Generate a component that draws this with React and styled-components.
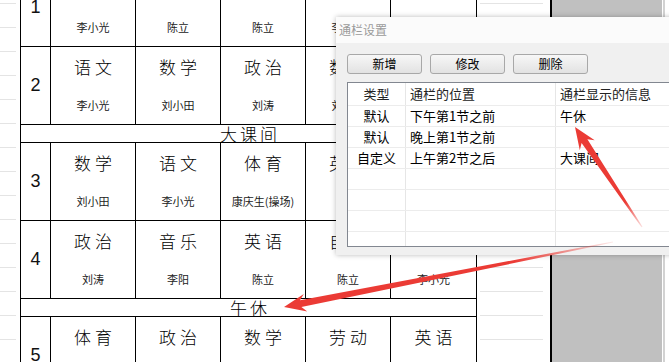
import styled, { createGlobalStyle } from "styled-components";

const PageStyle = createGlobalStyle`
  html, body {
    margin: 0;
    padding: 0;
    background: #fff;
  }
  body {
    font-family: "Noto Sans CJK SC", sans-serif;
  }
`;

const Screen = styled.div`
  position: relative;
  width: 669px;
  height: 362px;
  overflow: hidden;
  display: flex;
  background: #fff;
`;

const Gutter = styled.div`
  flex: none;
  width: ${(p) => p.$width}px;
  background-image: linear-gradient(to bottom, #e4e4e4 0 1px, transparent 1px);
  background-size: ${(p) => p.$line}px 24px;
  background-repeat: repeat-y;
  background-position: ${(p) => p.$inset}px 3px;
`;

const Timetable = styled.div`
  flex: none;
  align-self: flex-start;
  margin-top: -32px;
  display: grid;
  grid-template-columns: 29px repeat(4, 84px) 85px;
  gap: 1px;
  padding: 1px;
  background: #000;
`;

const NumberCell = styled.div`
  height: 77px;
  background: #fff;
  display: flex;
  align-items: center;
  justify-content: center;
  font-family: "Liberation Sans", Arial, sans-serif;
  font-size: 18px;
  color: #111;
`;

const LessonCell = styled.div`
  height: 77px;
  background: #fff;
  display: flex;
  flex-direction: column;
  align-items: center;
  padding-top: 9px;
  box-sizing: border-box;
`;

const Subject = styled.div`
  font-size: 17px;
  font-weight: 300;
  line-height: 22px;
  letter-spacing: 4px;
  padding-left: 4px;
  color: #000;
`;

const Teacher = styled.div`
  margin-top: 20px;
  font-size: 11px;
  line-height: 14px;
  color: #222;
`;

const BreakRow = styled.div`
  grid-column: 1 / -1;
  height: 17px;
  background: #fff;
  text-align: center;
  font-size: 17px;
  font-weight: 300;
  line-height: 17px;
  letter-spacing: 3px;
  padding-left: 3px;
  color: #000;
`;

const Divider = styled.div`
  flex: none;
  width: 2px;
  background: #000;
`;

const GrayPane = styled.div`
  flex: none;
  width: 110px;
  background: #c0c0c0;
`;

const PaneEdge = styled.div`
  flex: none;
  width: 2px;
  margin-left: 1px;
  background: #d2d2d2;
`;

const Dialog = styled.div`
  position: absolute;
  left: 336px;
  top: 17px;
  width: 360px;
  height: 238px;
  display: flex;
  flex-direction: column;
  background: #f0f0f0;
  box-shadow: 0 0 5px rgba(0, 0, 0, 0.28);
  z-index: 2;
`;

const TitleBar = styled.div`
  height: 26px;
  flex: none;
  padding-left: 3px;
  background: #fbfbfb;
  font-size: 12px;
  line-height: 26px;
  color: #9a9a9a;
`;

const DialogBody = styled.div`
  flex: 1;
  padding: 11px 0 0 11px;
  display: flex;
  flex-direction: column;
`;

const ButtonRow = styled.div`
  display: flex;
  gap: 8px;
`;

const Button = styled.button`
  width: 75px;
  height: 20px;
  padding: 0;
  border: 1px solid #a8a8a8;
  border-radius: 3px;
  background: linear-gradient(#f7f7f7, #e2e2e2);
  font-family: "Noto Sans CJK SC", sans-serif;
  font-size: 12px;
  line-height: 18px;
  color: #000;
`;

const ListBox = styled.div`
  margin-top: 8px;
  height: 165px;
  box-sizing: border-box;
  border: 1px solid #828790;
  border-right: none;
  background: #fff;
  overflow: hidden;
`;

const ListRow = styled.div`
  display: grid;
  grid-template-columns: 58px 150px 1fr;
  height: ${(p) => (p.$head ? 23 : 21)}px;
  border-bottom: 1px solid #ececec;
  box-sizing: border-box;
  font-size: 13px;
  line-height: ${(p) => (p.$head ? 22 : 20)}px;
  color: ${(p) => (p.$head ? "#222" : "#000")};
`;

const ListCell = styled.div`
  padding-left: ${(p) => (p.$center ? 0 : 4)}px;
  text-align: ${(p) => (p.$center ? "center" : "left")};
  border-right: 1px solid #e6e6e6;
  white-space: nowrap;
`;

const Overlay = styled.svg`
  position: absolute;
  left: 0;
  top: 0;
  z-index: 3;
  pointer-events: none;
`;

const weeks = [
  { n: 1, lessons: [["", "李小光"], ["", "陈立"], ["", "陈立"], ["", "李小光"], ["", "刘涛"]] },
  { n: 2, lessons: [["语文", "李小光"], ["数学", "刘小田"], ["政治", "刘涛"], ["数学", "刘小田"], ["英语", "陈立"]] },
  { brk: "大课间" },
  { n: 3, lessons: [["数学", "刘小田"], ["语文", "李小光"], ["体育", "康庆生(操场)"], ["英语", "陈立"], ["音乐", "李阳"]] },
  { n: 4, lessons: [["政治", "刘涛"], ["音乐", "李阳"], ["英语", "陈立"], ["自习", "陈立"], ["语文", "李小光"]] },
  { brk: "午休" },
  { n: 5, lessons: [["体育", "康庆生(操场)"], ["政治", "刘涛"], ["数学", "刘小田"], ["劳动", "李阳"], ["英语", "陈立"]] },
];

const bars = [
  ["默认", "下午第1节之前", "午休"],
  ["默认", "晚上第1节之前", ""],
  ["自定义", "上午第2节之后", "大课间"],
  ["", "", ""],
  ["", "", ""],
  ["", "", ""],
  ["", "", ""],
];

// tapered snip-tool arrow, tail -> tip
const arrowPoints = ([tx, ty], [px, py], head = 22, wing = 9, shaft = 3.5, tail = 0.6) => {
  const len = Math.hypot(px - tx, py - ty);
  const ux = (px - tx) / len;
  const uy = (py - ty) / len;
  const nx = -uy;
  const ny = ux;
  const bx = px - ux * head;
  const by = py - uy * head;
  const jx = px - ux * (head - 5);
  const jy = py - uy * (head - 5);
  const pts = [
    [tx + nx * tail, ty + ny * tail],
    [jx + nx * shaft, jy + ny * shaft],
    [bx + nx * wing, by + ny * wing],
    [px, py],
    [bx - nx * wing, by - ny * wing],
    [jx - nx * shaft, jy - ny * shaft],
    [tx - nx * tail, ty - ny * tail],
  ];
  return pts.map(([x, y]) => `${x.toFixed(1)},${y.toFixed(1)}`).join(" ");
};

const App = () => {
  return (
    <>
      <PageStyle />
      <Screen>
        <Gutter $width={20} $line={16} $inset={0} />
        <Timetable>
          {weeks.map((row, i) =>
            row.brk ? (
              <BreakRow key={i}>{row.brk}</BreakRow>
            ) : (
              [
                <NumberCell key={`n${i}`}>{row.n}</NumberCell>,
                ...row.lessons.map(([s, t], j) => (
                  <LessonCell key={`${i}-${j}`}>
                    <Subject>{s || "\u00a0"}</Subject>
                    <Teacher>{t}</Teacher>
                  </LessonCell>
                )),
              ]
            )
          )}
        </Timetable>
        <Gutter $width={73} $line={63} $inset={3} />
        <Divider />
        <GrayPane />
        <PaneEdge />

        <Dialog>
          <TitleBar>通栏设置</TitleBar>
          <DialogBody>
            <ButtonRow>
              <Button>新增</Button>
              <Button>修改</Button>
              <Button>删除</Button>
            </ButtonRow>
            <ListBox>
              <ListRow $head>
                <ListCell $center>类型</ListCell>
                <ListCell>通栏的位置</ListCell>
                <ListCell>通栏显示的信息</ListCell>
              </ListRow>
              {bars.map(([kind, pos, info], i) => (
                <ListRow key={i}>
                  <ListCell $center>{kind}</ListCell>
                  <ListCell>{pos}</ListCell>
                  <ListCell>{info}</ListCell>
                </ListRow>
              ))}
            </ListBox>
          </DialogBody>
        </Dialog>

        <Overlay width="669" height="362" viewBox="0 0 669 362">
          <defs>
            <linearGradient id="fadeA" gradientUnits="userSpaceOnUse" x1="642" y1="227" x2="575" y2="127">
              <stop offset="0" stopColor="#eb3b35" stopOpacity="0.15" />
              <stop offset="0.25" stopColor="#eb3b35" stopOpacity="1" />
            </linearGradient>
            <linearGradient id="fadeB" gradientUnits="userSpaceOnUse" x1="613" y1="242" x2="284" y2="307">
              <stop offset="0" stopColor="#eb3b35" stopOpacity="0.1" />
              <stop offset="0.3" stopColor="#eb3b35" stopOpacity="1" />
            </linearGradient>
          </defs>
          <polygon points={arrowPoints([642, 227], [575, 127])} fill="url(#fadeA)" />
          <polygon points={arrowPoints([613, 242], [284, 307])} fill="url(#fadeB)" />
        </Overlay>
      </Screen>
    </>
  );
};

export default App;
